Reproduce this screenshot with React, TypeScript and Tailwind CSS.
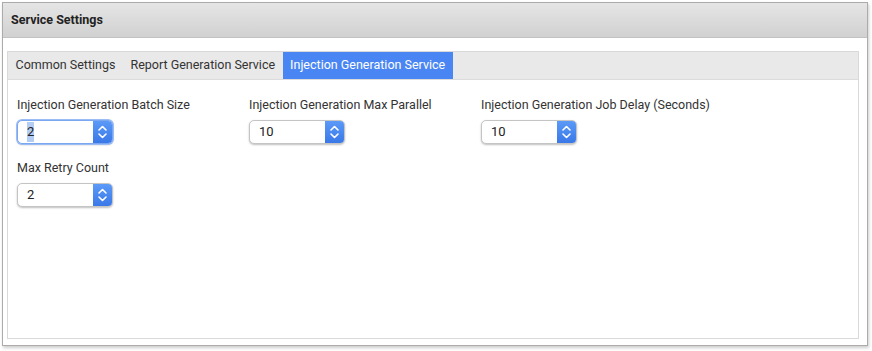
import React, { useState } from 'react';

const tabs = ['Common Settings', 'Report Generation Service', 'Injection Generation Service'];

const Spinner: React.FC<{ value: string; focused?: boolean }> = ({ value, focused }) => (
  <div
    className={`flex h-[24px] w-[96px] rounded-[5px] border bg-white shadow-[0_1px_2px_rgba(0,0,0,0.25)] ${
      focused ? 'border-[#7aa7f0] ring-1 ring-[#9bbcf5]' : 'border-[#c4c4c4]'
    }`}
  >
    <div className="flex flex-1 items-center pl-[9px] text-[13px] text-[#222]">
      <span className={focused ? 'bg-[#b3cdf5]' : ''}>{value}</span>
    </div>
    <div className="flex w-[19px] items-center justify-center rounded-r-[4px] bg-gradient-to-b from-[#5b9af7] to-[#3a78e8]">
      <svg width="11" height="20" viewBox="0 0 11 20" fill="none" stroke="white" strokeWidth="1.6" strokeLinecap="round" strokeLinejoin="round">
        <path d="M2 8 L5.5 4.5 L9 8" />
        <path d="M2 12 L5.5 15.5 L9 12" />
      </svg>
    </div>
  </div>
);

const Field: React.FC<{ label: string; value: string; focused?: boolean }> = ({ label, value, focused }) => (
  <div className="flex flex-col gap-[8px]">
    <label className="text-[12.5px] leading-[15px] text-[#333]">{label}</label>
    <Spinner value={value} focused={focused} />
  </div>
);

export default function App() {
  const [active, setActive] = useState(2);

  return (
    <div className="h-[351px] w-[872px] bg-white p-[2px] pr-[4px] pb-[5px] font-['Roboto',sans-serif]">
      <div className="flex h-full flex-col border border-[#ababab] shadow-[1px_2px_3px_rgba(0,0,0,0.2)]">
        <div className="flex h-[35px] items-center border-b border-[#c2c2c2] bg-gradient-to-b from-[#e6e5e5] to-[#d2d1d1] px-[8px]">
          <h2 className="text-[12.5px] font-bold text-[#222]">Service Settings</h2>
        </div>
        <div className="flex flex-1 flex-col pl-[4px] pr-[8px] pt-[13px] pb-[6px]">
          <div className="flex flex-1 flex-col border border-[#d9d9d9]">
            <div className="flex h-[28px] items-stretch border-b border-[#dcdcdc] bg-[#e9e9e9]">
              {tabs.map((t, i) => (
                <button
                  key={t}
                  onClick={() => setActive(i)}
                  className={`flex items-center px-[7.5px] text-[12.5px] ${
                    i === active ? 'bg-[#4a86f3] text-white' : 'text-[#333]'
                  }`}
                >
                  {t}
                </button>
              ))}
            </div>
            <div className="grid grid-cols-[232px_232px_232px] gap-y-[16px] px-[9px] pt-[17px]">
              <Field label="Injection Generation Batch Size" value="2" focused />
              <Field label="Injection Generation Max Parallel" value="10" />
              <Field label="Injection Generation Job Delay (Seconds)" value="10" />
              <Field label="Max Retry Count" value="2" />
            </div>
          </div>
        </div>
      </div>
    </div>
  );
}
